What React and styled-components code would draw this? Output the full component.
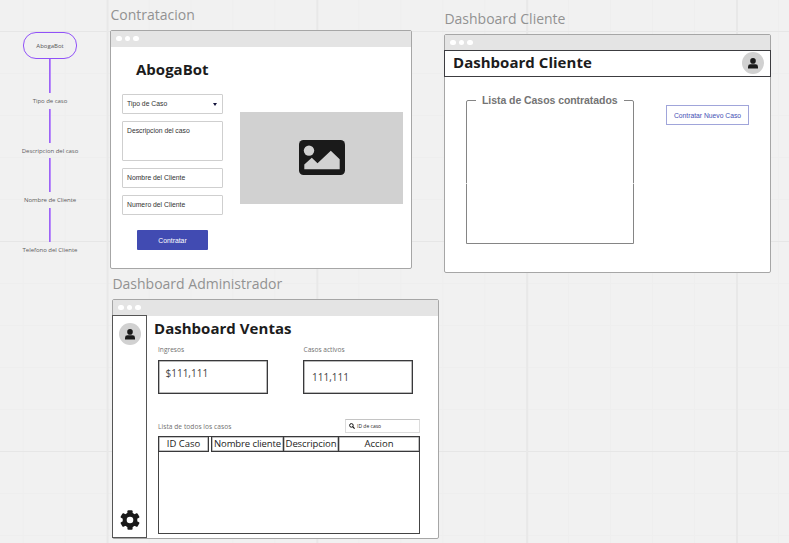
import React from "react";
import styled, { createGlobalStyle } from "styled-components";

const GlobalStyle = createGlobalStyle`
  * { box-sizing: border-box; }
  body { margin: 0; background: #f1f1f1; font-family: "Open Sans", "Noto Sans", sans-serif; }
`;

const Canvas = styled.main`
  position: relative;
  width: 789px;
  height: 543px;
  overflow: hidden;
  background-color: #f1f1f1;
  background-image:
    linear-gradient(90deg, #e8e8e8 1.5px, transparent 1.5px),
    linear-gradient(#e6e6e6 1px, transparent 1px),
    linear-gradient(90deg, #eeeeee 1px, transparent 1px),
    linear-gradient(#eeeeee 1px, transparent 1px);
  background-size: 209.8px 100%, 100% 210px, 41.96px 100%, 100% 42px;
  background-position: 106.6px 0, 0 31px, 22.7px 0, 0 31px;
`;

const Flow = styled.div`
  position: absolute;
  left: 5px;
  top: 32px;
  width: 90px;
  display: flex;
  flex-direction: column;
  align-items: center;
`;

const StartNode = styled.div`
  width: 54px;
  height: 27px;
  flex: none;
  display: flex;
  align-items: center;
  justify-content: center;
  border: 1.4px solid #9152f8;
  border-radius: 13px;
  font-size: 6px;
  color: #555;
`;

const Connector = styled.div`
  width: 2px;
  height: 34px;
  background: linear-gradient(90deg, #9d63f6 50%, #b88bfa 50%);
`;

const Step = styled.div`
  height: ${(p) => p.$h || 16}px;
  line-height: 16px;
  font-size: 6px;
  letter-spacing: -0.03px;
  color: #5c5c5c;
  white-space: nowrap;
`;

const Artboard = styled.section`
  position: absolute;
  left: ${(p) => p.$x}px;
  top: ${(p) => p.$y}px;
  width: ${(p) => p.$w}px;
`;

const ArtboardName = styled.div`
  height: 25px;
  padding-left: 0.4px;
  line-height: 20px;
  font-size: 14px;
  color: #929292;
  white-space: nowrap;
`;

const Browser = styled.div`
  height: ${(p) => p.$h}px;
  display: flex;
  flex-direction: column;
  border: 1px solid #a6a6a6;
  border-radius: 2px;
  background: #fff;
`;

const BrowserBar = styled.div`
  height: 16px;
  flex: none;
  display: flex;
  align-items: center;
  gap: 3px;
  padding: 0 0 1px 5px;
  background: #e4e4e4;
`;

const Dot = styled.i`
  width: 5.5px;
  height: 5.5px;
  border-radius: 50%;
  background: #fff;
`;

const Title = styled.h1`
  margin: 0;
  font-size: 15px;
  line-height: 20px;
  font-weight: 700;
  letter-spacing: 0.03px;
  color: #1c1c1c;
  white-space: nowrap;
`;

const HirePage = styled.div`
  flex: 1;
  display: flex;
  padding: 12px 0 0 11px;
`;

const Form = styled.div`
  width: 118px;
  display: flex;
  flex-direction: column;
  gap: 7px;
  & > h1 { margin: 0 0 8px 14px; letter-spacing: 0; }
`;

const Field = styled.div`
  width: 101px;
  height: ${(p) => p.$h || 20}px;
  display: flex;
  justify-content: space-between;
  padding: 0 5px 0 4px;
  line-height: 18px;
  border: 1px solid #cfcfcf;
  border-radius: 1px;
  font-family: "Liberation Sans", Arial, sans-serif;
  font-size: 6.8px;
  color: #333;
  white-space: nowrap;
`;

const Caret = styled.i`
  align-self: center;
  border: 2.5px solid transparent;
  border-top: 3px solid #11113a;
  border-bottom: 0;
`;

const PrimaryButton = styled.button`
  width: 71px;
  height: 20px;
  margin: 8px 0 0 15px;
  padding: 0;
  border: 0;
  border-radius: 1px;
  background: #414bb2;
  color: #fff;
  font: 6.8px "Liberation Sans", Arial, sans-serif;
`;

const ImageBox = styled.div`
  width: 163px;
  height: 92px;
  margin-top: 53px;
  padding-bottom: 1px;
  display: flex;
  align-items: center;
  justify-content: center;
  background: #d1d1d1;
`;

const ClientHeader = styled.header`
  height: 27px;
  margin: -1px -1px 0;
  flex: none;
  display: flex;
  align-items: flex-start;
  justify-content: space-between;
  padding: 1px 6px 0 8px;
  border: 1px solid #3c3c40;
`;

const Avatar = styled.div`
  width: 22px;
  height: 22px;
  display: flex;
  align-items: center;
  justify-content: center;
  border-radius: 50%;
  background: #d1d1d1;
`;

const ClientPage = styled.div`
  display: flex;
  align-items: flex-start;
  padding: 16px 0 0 21px;
`;

const CaseList = styled.fieldset`
  width: 168px;
  height: 151px;
  margin: 0;
  padding: 0;
  border: 1px solid #858585;
  border-radius: 2px 2px 0 0;
`;

const Legend = styled.legend`
  margin-left: 9px;
  padding: 0 6px;
  font: 700 10.5px/14px "Liberation Sans", Arial, sans-serif;
  letter-spacing: -0.06px;
  color: #747474;
  white-space: nowrap;
`;

const Seam = styled.div`
  height: 1px;
  margin: 76px -1px 0;
  display: flex;
  justify-content: space-between;
  &::before, &::after { content: ""; width: 1px; background: #ddd; }
`;

const OutlineButton = styled.button`
  width: 83px;
  height: 20px;
  margin: 12px 0 0 32px;
  padding: 0;
  border: 1px solid #a0a5da;
  background: #fff;
  color: #4550b5;
  font: 6.75px "Liberation Sans", Arial, sans-serif;
  white-space: nowrap;
`;

const AdminPage = styled.div`
  flex: 1;
  display: flex;
`;

const Sidebar = styled.aside`
  width: 35px;
  margin: -1px 0 0 -1px;
  display: flex;
  flex-direction: column;
  align-items: center;
  justify-content: space-between;
  padding: 7px 0 7px 0;
  border: 1px solid #555;
`;

const AdminMain = styled.div`
  flex: 1;
  padding: 2px 0 0 11px;
  & > h1 { margin-left: -4px; }
`;

const Stats = styled.div`
  display: flex;
  gap: 36px;
  margin-top: 7px;
`;

const Caption = styled.div`
  height: 15px;
  line-height: 10px;
  font-size: 6.6px;
  letter-spacing: ${(p) => p.$ls || 0}px;
  color: #707070;
  white-space: nowrap;
`;

const StatBox = styled.div`
  width: 110px;
  height: 34px;
  margin-left: -0.5px;
  padding: ${(p) => p.$pad};
  border: 1px solid #39393b;
  box-shadow: inset 0 0 0 0.5px #777;
  font-size: 10px;
  line-height: 14px;
  color: #444;
`;

const TableTools = styled.div`
  width: 262px;
  height: 17px;
  margin-top: 25px;
  display: flex;
  justify-content: space-between;
`;

const ListCaption = styled(Caption)`
  padding-top: 3px;
`;

const Search = styled.div`
  width: 75px;
  height: 14px;
  display: flex;
  align-items: center;
  gap: 2px;
  padding-left: 3px;
  border: 1px solid #dcdcdc;
  border-top-color: #c4c4c4;
  font-size: 5px;
  color: #222;
`;

const Table = styled.div`
  width: 262px;
  height: 98px;
  border: 1px solid #444;
`;

const TableHead = styled.div`
  display: flex;
  margin: -1px -1px 0;
`;

const HeadCell = styled.div`
  width: ${(p) => p.$w}px;
  height: 16px;
  margin-right: ${(p) => p.$gap || 0}px;
  border: 1px solid #39393b;
  box-shadow: inset 0 0 0 0.5px #888;
  text-align: center;
  font-size: 9.5px;
  line-height: 13px;
  letter-spacing: ${(p) => p.$ls || 0}px;
  color: #222;
  white-space: nowrap;
`;

const PersonIcon = () => (
  <svg width="10" height="11" viewBox="0 0 10 11" fill="#1a1a1a">
    <circle cx="5" cy="2.9" r="2.8" />
    <path d="M0 10.5V8.7Q0 6.3 2.5 6.3H7.5Q10 6.3 10 8.7V10.5Z" />
  </svg>
);

const PictureIcon = () => (
  <svg width="46" height="35" viewBox="0 0 46 35">
    <rect width="46" height="35" rx="4.5" fill="#1a1a1a" />
    <circle cx="10" cy="10.6" r="5.2" fill="#d1d1d1" />
    <path d="M5.3 29.2V24.5L12.8 17.8L18.5 23.3L31.8 10.8L40.7 19.3V29.2Z" fill="#d1d1d1" />
  </svg>
);

const GearIcon = () => (
  <svg width="20" height="20" viewBox="0 0 20 20">
    <g fill="#1a1a1a">
      <circle cx="10" cy="10" r="7.4" />
      {[0, 60, 120].map((a) => (
        <rect key={a} x="7.4" y="0.2" width="5.2" height="19.6" rx="1" transform={`rotate(${a} 10 10)`} />
      ))}
    </g>
    <circle cx="10" cy="10" r="3.3" fill="#fff" />
  </svg>
);

const SearchIcon = () => (
  <svg width="6" height="6" viewBox="0 0 6 6" fill="none" stroke="#111">
    <circle cx="2.4" cy="2.4" r="1.8" strokeWidth="1" />
    <path d="M3.7 3.7L5.6 5.6" strokeWidth="1.2" />
  </svg>
);

const WindowBar = () => (
  <BrowserBar>
    <Dot />
    <Dot />
    <Dot />
  </BrowserBar>
);

export default function App() {
  return (
    <>
      <GlobalStyle />
      <Canvas>
        <Flow>
          <StartNode>AbogaBot</StartNode>
          <Connector />
          <Step>Tipo de caso</Step>
          <Connector />
          <Step $h={15}>Descripcion del caso</Step>
          <Connector />
          <Step>Nombre de Cliente</Step>
          <Connector />
          <Step>Telefono del Cliente</Step>
        </Flow>

        <Artboard $x={110} $y={5} $w={302}>
          <ArtboardName>Contratacion</ArtboardName>
          <Browser $h={239}>
            <WindowBar />
            <HirePage>
              <Form>
                <Title>AbogaBot</Title>
                <Field>Tipo de Caso<Caret /></Field>
                <Field $h={40}>Descripcion del caso</Field>
                <Field>Nombre del Cliente</Field>
                <Field>Numero del Cliente</Field>
                <PrimaryButton>Contratar</PrimaryButton>
              </Form>
              <ImageBox><PictureIcon /></ImageBox>
            </HirePage>
          </Browser>
        </Artboard>

        <Artboard $x={444} $y={9} $w={327}>
          <ArtboardName>Dashboard Cliente</ArtboardName>
          <Browser $h={239}>
            <WindowBar />
            <ClientHeader>
              <Title>Dashboard Cliente</Title>
              <Avatar><PersonIcon /></Avatar>
            </ClientHeader>
            <ClientPage>
              <CaseList>
                <Legend>Lista de Casos contratados</Legend>
                <Seam />
              </CaseList>
              <OutlineButton>Contratar Nuevo Caso</OutlineButton>
            </ClientPage>
          </Browser>
        </Artboard>

        <Artboard $x={112} $y={274} $w={327}>
          <ArtboardName>Dashboard Administrador</ArtboardName>
          <Browser $h={240}>
            <WindowBar />
            <AdminPage>
              <Sidebar>
                <Avatar><PersonIcon /></Avatar>
                <GearIcon />
              </Sidebar>
              <AdminMain>
                <Title>Dashboard Ventas</Title>
                <Stats>
                  <div>
                    <Caption>Ingresos</Caption>
                    <StatBox $pad="5px 0 0 7px">$111,111</StatBox>
                  </div>
                  <div>
                    <Caption>Casos activos</Caption>
                    <StatBox $pad="9px 0 0 8px">111,111</StatBox>
                  </div>
                </Stats>
                <TableTools>
                  <ListCaption $ls={0.05}>Lista de todos los casos</ListCaption>
                  <Search><SearchIcon />ID de caso</Search>
                </TableTools>
                <Table>
                  <TableHead>
                    <HeadCell $w={51} $gap={2}>ID Caso</HeadCell>
                    <HeadCell $w={73} $gap={-1} $ls={-0.1}>Nombre cliente</HeadCell>
                    <HeadCell $w={56} $gap={-1} $ls={-0.1}>Descripcion</HeadCell>
                    <HeadCell $w={82}>Accion</HeadCell>
                  </TableHead>
                </Table>
              </AdminMain>
            </AdminPage>
          </Browser>
        </Artboard>
      </Canvas>
    </>
  );
}
